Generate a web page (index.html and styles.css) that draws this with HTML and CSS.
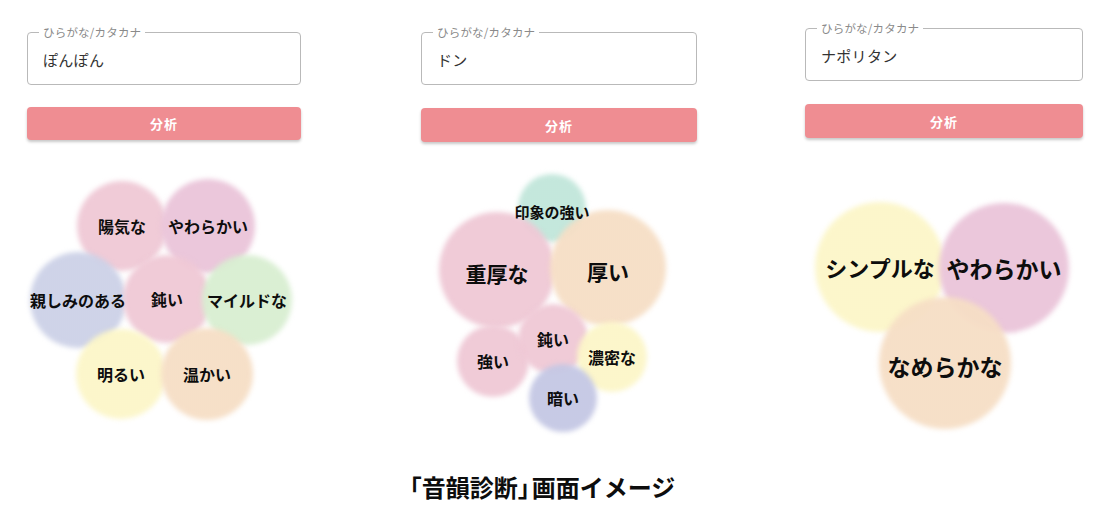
FILE: index.html
```html
<!DOCTYPE html>
<html lang="ja">
<head>
<meta charset="utf-8">
<title>音韻診断</title>
<link rel="stylesheet" href="styles.css">
</head>
<body>
<main class="page">
  <div class="row">
    <section class="panel p1">
      <div class="field"><span class="label">ひらがな/カタカナ</span><span class="value">ぽんぽん</span></div>
      <button class="btn">分析</button>
      <div class="chart">
        <div class="bubble pink" style="left:53px;top:14px;width:84px;height:84px"><span>陽気な</span></div>
        <div class="bubble mauve" style="left:137px;top:12px;width:88px;height:88px"><span>やわらかい</span></div>
        <div class="bubble blue" style="left:6px;top:85px;width:90px;height:90px"><span>親しみのある</span></div>
        <div class="bubble pink" style="left:99px;top:88px;width:82px;height:82px"><span>鈍い</span></div>
        <div class="bubble green" style="left:178px;top:88px;width:84px;height:84px"><span>マイルドな</span></div>
        <div class="bubble yellow" style="left:52px;top:162px;width:84px;height:84px"><span>明るい</span></div>
        <div class="bubble orange" style="left:137px;top:161px;width:86px;height:86px"><span>温かい</span></div>
      </div>
    </section>
    <section class="panel p2">
      <div class="field"><span class="label">ひらがな/カタカナ</span><span class="value">ドン</span></div>
      <button class="btn">分析</button>
      <div class="chart">
        <div class="bubble teal" style="left:100px;top:7px;width:62px;height:62px"><span class="s15 down">印象の強い</span></div>
        <div class="bubble pink" style="left:21px;top:45px;width:110px;height:110px"><span class="s21 down">重厚な</span></div>
        <div class="bubble orange" style="left:132px;top:43px;width:110px;height:110px"><span class="s21 down">厚い</span></div>
        <div class="bubble pink" style="left:39px;top:158px;width:66px;height:66px"><span>強い</span></div>
        <div class="bubble pink" style="left:100px;top:137px;width:64px;height:64px"><span>鈍い</span></div>
        <div class="bubble yellow" style="left:159px;top:155px;width:64px;height:64px"><span>濃密な</span></div>
        <div class="bubble violet" style="left:111px;top:197px;width:62px;height:62px"><span>暗い</span></div>
      </div>
    </section>
    <section class="panel p3">
      <div class="field"><span class="label">ひらがな/カタカナ</span><span class="value">ナポリタン</span></div>
      <button class="btn">分析</button>
      <div class="chart">
        <div class="bubble yellow" style="left:13px;top:39px;width:124px;height:124px"><span class="s22">シンプルな</span></div>
        <div class="bubble mauve" style="left:137px;top:40px;width:124px;height:124px"><span class="s23">やわらかい</span></div>
        <div class="bubble orange" style="left:77px;top:134px;width:126px;height:126px"><span class="s23 down">なめらかな</span></div>
      </div>
    </section>
  </div>
  <h1 class="title"><span class="open">「</span>音韻診断<span class="close">」</span>画面イメージ</h1>
</main>
</body>
</html>
```
FILE: styles.css
```css
* { box-sizing: border-box; }
html, body { margin: 0; padding: 0; background: #ffffff; }
body {
  width: 1118px;
  height: 519px;
  overflow: hidden;
  font-family: "Noto Sans CJK JP", "Noto Sans", sans-serif;
  color: #111;
}
.page { display: flex; flex-direction: column; }
.row { display: flex; align-items: flex-start; height: 430px; }
.panel { display: flex; flex-direction: column; }
.p1 { margin-left: 27px; width: 274px; margin-top: 32px; }
.p2 { margin-left: 120px; width: 276px; margin-top: 32px; }
.p3 { margin-left: 108px; width: 278px; margin-top: 28px; }

.field {
  position: relative;
  height: 53px;
  border: 1px solid #b9b9b9;
  border-radius: 4px;
  display: flex;
  align-items: center;
  padding-left: 15px;
}
.label {
  position: absolute;
  left: 11px;
  top: -8px;
  padding: 0 4px;
  background: #fff;
  font-size: 11.5px;
  line-height: 14px;
  color: #8a8a8a;
  letter-spacing: 0.2px;
}
.value {
  font-size: 15px;
  color: #333;
  letter-spacing: 0.3px;
  margin-top: 1px;
}
.btn {
  margin-top: 22px;
  height: 33px;
  border: none;
  border-radius: 4px;
  background: #ef8d92;
  color: #fff;
  font-family: "Noto Sans CJK JP", sans-serif;
  font-weight: 700;
  font-size: 13px;
  letter-spacing: 1px;
  box-shadow: 0 2px 3px rgba(0,0,0,0.22);
  padding: 0;
}
.p2 .btn, .p3 .btn { margin-top: 23px; height: 34px; }

.chart { position: relative; height: 260px; margin-top: 30px; }
.p2 .chart, .p3 .chart { margin-top: 28px; }

.bubble {
  position: absolute;
  display: flex;
  align-items: center;
  justify-content: center;
}
.bubble::before {
  content: "";
  position: absolute;
  inset: -3px;
  border-radius: 50%;
  background: radial-gradient(circle, var(--c) 0%, var(--c) 82%, var(--c2) 91%, rgba(255,255,255,0) 100%);
  filter: blur(2.5px);
  z-index: 0;
}
.bubble span {
  position: relative;
  z-index: 2;
  font-weight: 700;
  font-size: 16px;
  line-height: 1;
  white-space: nowrap;
  color: #0d0d0d;
}
.bubble span.s15 { font-size: 15px; }
.bubble span.s21 { font-size: 21px; }
.bubble span.s22 { font-size: 22px; }
.bubble span.s23 { font-size: 23px; }
.bubble span.down { top: 3px; }

.pink   { --c: rgba(239, 200, 213, 0.95); --c2: rgba(243, 215, 225, 0.7); }
.mauve  { --c: rgba(234, 196, 217, 0.95); --c2: rgba(240, 213, 228, 0.7); }
.blue   { --c: rgba(204, 209, 231, 0.95); --c2: rgba(218, 222, 239, 0.7); }
.green  { --c: rgba(216, 238, 209, 0.95); --c2: rgba(228, 243, 223, 0.7); }
.yellow { --c: rgba(252, 246, 200, 0.95); --c2: rgba(253, 249, 219, 0.7); }
.orange { --c: rgba(246, 222, 197, 0.95); --c2: rgba(248, 232, 215, 0.7); }
.teal   { --c: rgba(193, 230, 218, 0.95); --c2: rgba(212, 238, 229, 0.7); }
.violet { --c: rgba(196, 199, 228, 0.95); --c2: rgba(214, 216, 237, 0.7); }

.title {
  margin: 42px 0 0 0;
  width: 1080px;
  text-align: center;
  font-size: 24px;
  line-height: 30px;
  font-weight: 700;
  color: #0d0d0d;
  font-family: "Noto Sans CJK JP", sans-serif;
}
.title .open { margin-left: -7px; }
.title .close { letter-spacing: -10px; margin-right: 0; }
```
